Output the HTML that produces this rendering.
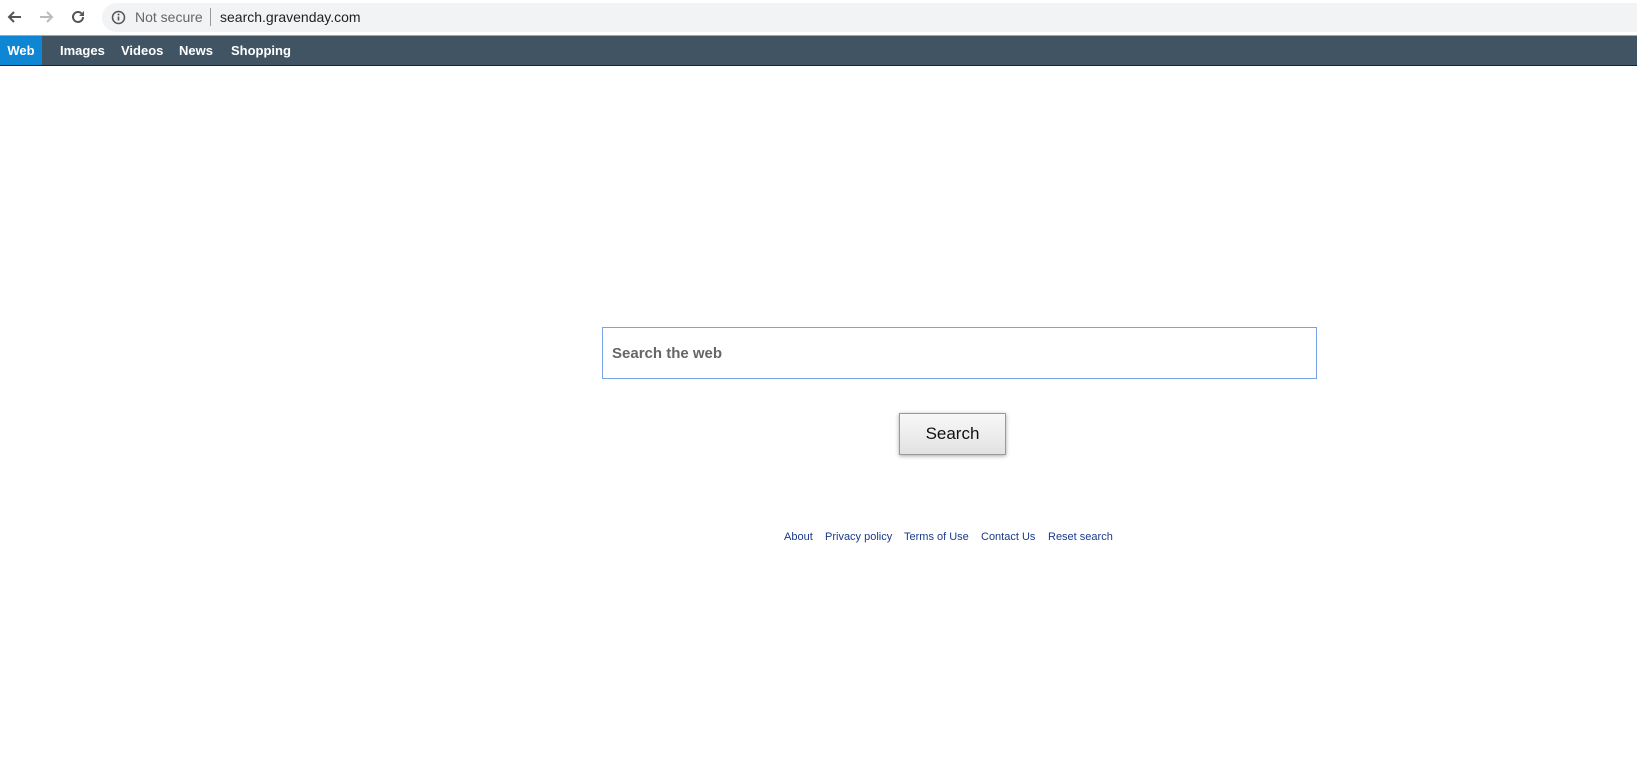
<!DOCTYPE html>
<html><head><style>
body{margin:0;width:1637px;height:777px;background:#fff;font-family:"Liberation Sans",Arial,sans-serif;position:relative;overflow:hidden}
.top{position:absolute;left:0;top:0;width:1637px;height:35px;background:#fff}
.omni{position:absolute;left:102px;top:3px;right:0;height:29px;background:#f1f3f4;border-radius:15px 0 0 15px}
.nav{position:absolute;left:0;top:35px;width:1637px;height:29px;background:#405463;border-top:1px solid #9aa;border-bottom:1px solid #222}
.nav span{position:absolute;top:0;line-height:29px;color:#fff;font-weight:bold;font-size:13px}
.box{position:absolute;left:602px;top:327px;width:715px;height:52px;border:1px solid #7aa3e5;box-sizing:border-box}
.box span{position:absolute;left:9px;top:17px;font-size:15px;font-weight:bold;color:#666}
.btn{position:absolute;left:899px;top:413px;width:107px;height:42px;box-sizing:border-box;border:1px solid #999;background:linear-gradient(#f8f8f8,#e2e2e2);box-shadow:0 1px 4px rgba(0,0,0,.35);font-size:17px;text-align:center;line-height:40px;color:#111}
.ft{position:absolute;top:531px;font-size:11px;color:#1a3a8a}
</style></head><body>
<div class="top">
<svg style="position:absolute;left:6px;top:8px" width="18" height="18" viewBox="0 0 18 18"><path d="M15 9H3M8 4L3 9l5 5" stroke="#555" stroke-width="2" fill="none"/></svg>
<svg style="position:absolute;left:37px;top:8px" width="18" height="18" viewBox="0 0 18 18"><path d="M3 9h12M10 4l5 5-5 5" stroke="#bbb" stroke-width="2" fill="none"/></svg>
<svg style="position:absolute;left:69px;top:8px" width="18" height="18" viewBox="0 0 18 18"><path d="M14 9a5 5 0 1 1-1.5-3.6" stroke="#555" stroke-width="2" fill="none"/><path d="M15 3v5h-5z" fill="#555"/></svg>
<div class="omni">
<svg style="position:absolute;left:9px;top:7px" width="15" height="15" viewBox="0 0 15 15"><circle cx="7.5" cy="7.5" r="6" stroke="#555" stroke-width="1.5" fill="none"/><path d="M7.5 6.5v4" stroke="#555" stroke-width="1.6"/><circle cx="7.5" cy="4.5" r="1" fill="#555"/></svg>
<span style="position:absolute;left:33px;top:6px;font-size:14px;color:#666">Not secure</span>
<span style="position:absolute;left:108px;top:5px;width:1px;height:18px;background:#999"></span>
<span style="position:absolute;left:118px;top:6px;font-size:14px;color:#222">search.gravenday.com</span>
</div></div>
<div class="nav">
<span style="left:0;width:42px;background:#0e86d4;text-align:center">Web</span>
<span style="left:60px">Images</span><span style="left:121px">Videos</span><span style="left:179px">News</span><span style="left:231px">Shopping</span>
</div>
<div class="box"><span>Search the web</span></div>
<div class="btn">Search</div>
<span class="ft" style="left:784px">About</span>
<span class="ft" style="left:825px">Privacy policy</span>
<span class="ft" style="left:904px">Terms of Use</span>
<span class="ft" style="left:981px">Contact Us</span>
<span class="ft" style="left:1048px">Reset search</span>
</body></html>
